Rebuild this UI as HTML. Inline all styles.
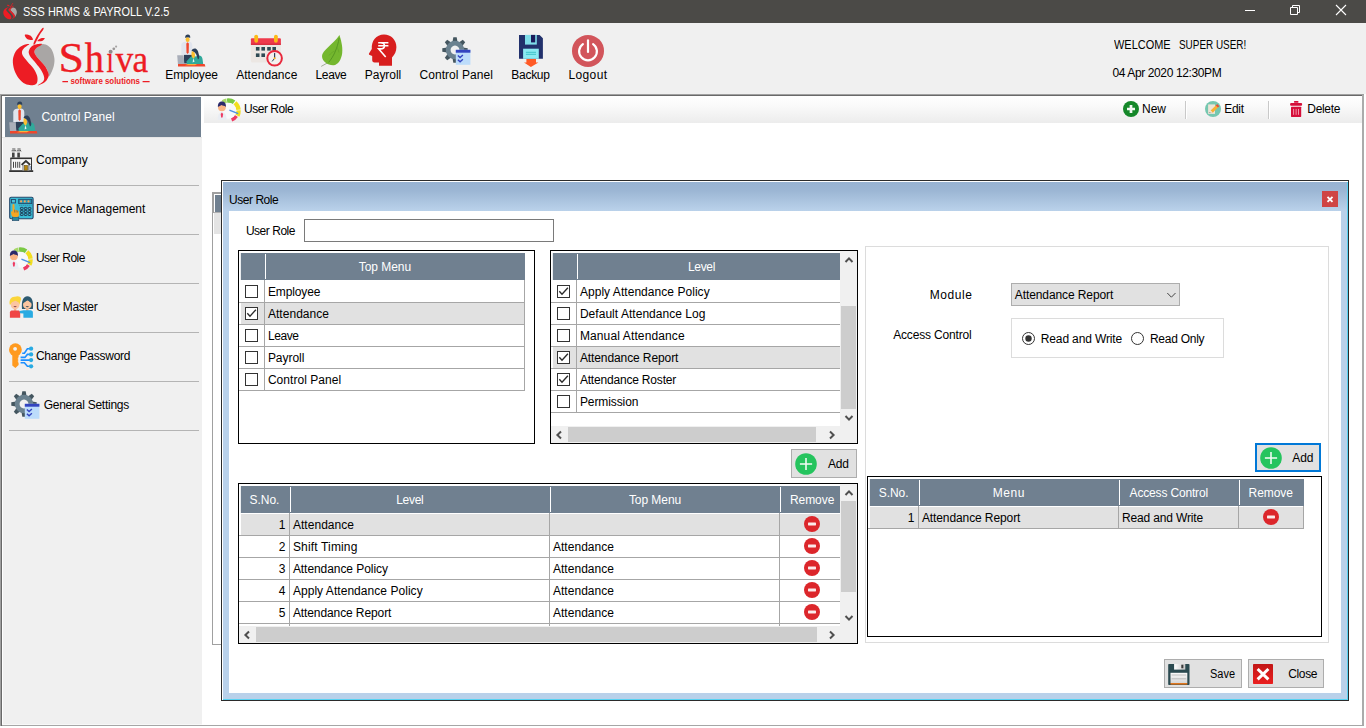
<!DOCTYPE html><html><head><meta charset="utf-8"><title>SSS HRMS &amp; PAYROLL</title><style>html,body{margin:0;padding:0}body{width:1366px;height:728px;overflow:hidden;position:relative;background:#f0f0f0;font-family:"Liberation Sans",sans-serif;font-size:12px;color:#000}svg{display:block;overflow:visible}</style></head><body>
<div style="position:absolute;left:0px;top:0px;width:1366px;height:23px;background:#4b4a47"></div>
<svg style="position:absolute;left:3px;top:3.4px" width="14" height="16.4" viewBox="0 0 43 58" preserveAspectRatio="none"><path d="M30.04,16.13 C31.96,15.77 34.30,16.74 36.00,17.83 C37.70,18.92 39.19,20.60 40.26,22.68 C41.32,24.77 42.10,27.93 42.38,30.34 C42.67,32.75 42.43,34.88 41.96,37.15 C41.49,39.42 40.43,42.09 39.57,43.96 C38.72,45.83 37.45,48.38 36.85,48.38 C36.26,48.38 36.57,45.55 36.00,43.96 C35.43,42.37 34.58,40.55 33.45,38.85 C32.31,37.15 30.75,35.59 29.19,33.74 C27.63,31.90 25.22,29.49 24.09,27.79 C22.95,26.09 22.31,24.84 22.38,23.53 C22.45,22.23 23.23,21.19 24.51,19.96 C25.79,18.72 28.13,16.48 30.04,16.13 Z" fill="#a9a6a5"/><path d="M17.28,16.30 C17.63,15.67 15.72,15.86 14.30,16.21 C12.88,16.57 10.54,17.21 8.77,18.43 C6.99,19.65 4.98,21.26 3.66,23.53 C2.34,25.80 1.06,28.92 0.85,32.04 C0.64,35.16 1.35,39.13 2.38,42.26 C3.42,45.38 5.29,48.50 7.06,50.77 C8.84,53.04 11.04,54.78 13.02,55.87 C15.01,56.96 17.21,57.25 18.98,57.32 C20.75,57.39 22.58,57.04 23.66,56.30 C24.74,55.56 25.23,54.38 25.45,52.89 C25.66,51.40 25.59,49.42 24.94,47.36 C24.28,45.30 23.09,42.82 21.53,40.55 C19.97,38.28 17.35,35.87 15.57,33.74 C13.80,31.62 11.82,29.49 10.89,27.79 C9.97,26.09 9.83,24.84 10.04,23.53 C10.26,22.23 10.96,21.16 12.17,19.96 C13.38,18.75 16.92,16.92 17.28,16.30 Z" fill="#ed1c24"/><path d="M20.51,17.83 C21.79,16.92 23.35,16.50 24.94,16.21 C26.52,15.93 30.11,15.50 30.04,16.13 C29.97,16.75 25.79,18.72 24.51,19.96 C23.23,21.19 22.45,22.23 22.38,23.53 C22.31,24.84 22.95,26.09 24.09,27.79 C25.22,29.49 27.63,31.90 29.19,33.74 C30.75,35.59 32.31,37.15 33.45,38.85 C34.58,40.55 35.46,42.47 36.00,43.96 C36.54,45.45 36.94,46.37 36.68,47.79 C36.43,49.21 35.57,51.12 34.47,52.47 C33.36,53.82 31.49,55.06 30.04,55.87 C28.60,56.68 25.62,57.72 25.79,57.32 C25.96,56.92 30.01,54.87 31.06,53.49 C32.11,52.11 32.40,50.94 32.09,49.06 C31.77,47.19 30.52,44.52 29.19,42.26 C27.86,39.99 25.79,37.57 24.09,35.45 C22.38,33.32 20.18,31.19 18.98,29.49 C17.77,27.79 17.13,26.54 16.85,25.23 C16.57,23.93 16.67,22.89 17.28,21.66 C17.89,20.43 19.23,18.74 20.51,17.83 Z" fill="#ed1c24"/><path d="M21.53,15.45 C21.91,14.03 23.94,9.87 25.36,7.36 C26.78,4.85 29.01,1.43 30.04,0.38 C31.08,-0.67 32.03,-0.13 31.57,1.06 C31.12,2.26 28.74,5.06 27.32,7.53 C25.90,10.00 24.03,14.55 23.06,15.87 C22.10,17.19 21.15,16.87 21.53,15.45 Z" fill="#ed1c24"/><path d="M12.85,6.77 C13.38,6.21 16.96,6.78 18.30,7.62 C19.63,8.45 21.38,11.23 20.85,11.79 C20.33,12.34 16.48,11.77 15.15,10.94 C13.82,10.10 12.33,7.32 12.85,6.77 Z" fill="#ed1c24"/><path d="M25.36,13.06 C25.11,12.64 27.28,10.89 28.51,10.43 C29.74,9.96 32.51,9.83 32.77,10.26 C33.02,10.68 31.28,12.51 30.04,12.98 C28.81,13.45 25.62,13.49 25.36,13.06 Z" fill="#ed1c24"/></svg>
<div style="position:absolute;top:4.84px;line-height:14px;font-size:12px;white-space:pre;left:22.9px;color:#fff;transform:scaleX(0.91);transform-origin:0 0;">SSS HRMS &amp; PAYROLL V.2.5</div>
<svg style="position:absolute;left:1240px;top:0" width="126" height="23" viewBox="0 0 126 23"><path d="M5,10.5 H15" stroke="#fff" stroke-width="1"/><path d="M50.5,7.5 H57.5 V14.5 H50.5 Z M52.5,7.5 V5.5 H59.5 V12.5 H57.5" stroke="#fff" stroke-width="1" fill="none"/><path d="M96,5 L106,15 M106,5 L96,15" stroke="#fff" stroke-width="1.1"/></svg>
<svg style="position:absolute;left:12px;top:28px" width="43" height="58" viewBox="0 0 43 58"><path d="M30.04,16.13 C31.96,15.77 34.30,16.74 36.00,17.83 C37.70,18.92 39.19,20.60 40.26,22.68 C41.32,24.77 42.10,27.93 42.38,30.34 C42.67,32.75 42.43,34.88 41.96,37.15 C41.49,39.42 40.43,42.09 39.57,43.96 C38.72,45.83 37.45,48.38 36.85,48.38 C36.26,48.38 36.57,45.55 36.00,43.96 C35.43,42.37 34.58,40.55 33.45,38.85 C32.31,37.15 30.75,35.59 29.19,33.74 C27.63,31.90 25.22,29.49 24.09,27.79 C22.95,26.09 22.31,24.84 22.38,23.53 C22.45,22.23 23.23,21.19 24.51,19.96 C25.79,18.72 28.13,16.48 30.04,16.13 Z" fill="#a9a6a5"/><path d="M17.28,16.30 C17.63,15.67 15.72,15.86 14.30,16.21 C12.88,16.57 10.54,17.21 8.77,18.43 C6.99,19.65 4.98,21.26 3.66,23.53 C2.34,25.80 1.06,28.92 0.85,32.04 C0.64,35.16 1.35,39.13 2.38,42.26 C3.42,45.38 5.29,48.50 7.06,50.77 C8.84,53.04 11.04,54.78 13.02,55.87 C15.01,56.96 17.21,57.25 18.98,57.32 C20.75,57.39 22.58,57.04 23.66,56.30 C24.74,55.56 25.23,54.38 25.45,52.89 C25.66,51.40 25.59,49.42 24.94,47.36 C24.28,45.30 23.09,42.82 21.53,40.55 C19.97,38.28 17.35,35.87 15.57,33.74 C13.80,31.62 11.82,29.49 10.89,27.79 C9.97,26.09 9.83,24.84 10.04,23.53 C10.26,22.23 10.96,21.16 12.17,19.96 C13.38,18.75 16.92,16.92 17.28,16.30 Z" fill="#ed1c24"/><path d="M20.51,17.83 C21.79,16.92 23.35,16.50 24.94,16.21 C26.52,15.93 30.11,15.50 30.04,16.13 C29.97,16.75 25.79,18.72 24.51,19.96 C23.23,21.19 22.45,22.23 22.38,23.53 C22.31,24.84 22.95,26.09 24.09,27.79 C25.22,29.49 27.63,31.90 29.19,33.74 C30.75,35.59 32.31,37.15 33.45,38.85 C34.58,40.55 35.46,42.47 36.00,43.96 C36.54,45.45 36.94,46.37 36.68,47.79 C36.43,49.21 35.57,51.12 34.47,52.47 C33.36,53.82 31.49,55.06 30.04,55.87 C28.60,56.68 25.62,57.72 25.79,57.32 C25.96,56.92 30.01,54.87 31.06,53.49 C32.11,52.11 32.40,50.94 32.09,49.06 C31.77,47.19 30.52,44.52 29.19,42.26 C27.86,39.99 25.79,37.57 24.09,35.45 C22.38,33.32 20.18,31.19 18.98,29.49 C17.77,27.79 17.13,26.54 16.85,25.23 C16.57,23.93 16.67,22.89 17.28,21.66 C17.89,20.43 19.23,18.74 20.51,17.83 Z" fill="#ed1c24"/><path d="M21.53,15.45 C21.91,14.03 23.94,9.87 25.36,7.36 C26.78,4.85 29.01,1.43 30.04,0.38 C31.08,-0.67 32.03,-0.13 31.57,1.06 C31.12,2.26 28.74,5.06 27.32,7.53 C25.90,10.00 24.03,14.55 23.06,15.87 C22.10,17.19 21.15,16.87 21.53,15.45 Z" fill="#ed1c24"/><path d="M12.85,6.77 C13.38,6.21 16.96,6.78 18.30,7.62 C19.63,8.45 21.38,11.23 20.85,11.79 C20.33,12.34 16.48,11.77 15.15,10.94 C13.82,10.10 12.33,7.32 12.85,6.77 Z" fill="#ed1c24"/><path d="M25.36,13.06 C25.11,12.64 27.28,10.89 28.51,10.43 C29.74,9.96 32.51,9.83 32.77,10.26 C33.02,10.68 31.28,12.51 30.04,12.98 C28.81,13.45 25.62,13.49 25.36,13.06 Z" fill="#ed1c24"/></svg>
<svg style="position:absolute;left:58px;top:38px" width="96" height="50" viewBox="58 38 96 50"><g font-family="Liberation Serif" font-size="42.5" fill="#ed1c24" stroke="#ed1c24" stroke-width="0.4"><text transform="translate(58.48 71.7) scale(1.077 1)" x="0" y="0">S</text><text transform="translate(84.64 71.7) scale(0.901 1)" x="0" y="0">h</text><text transform="translate(106.55 71.7) scale(0.614 0.885)" x="0" y="0">&#305;</text><text transform="translate(115.60 71.7) scale(0.835 0.885)" x="0" y="0">v</text><text transform="translate(132.46 71.7) scale(0.827 0.885)" x="0" y="0">a</text></g><circle cx="110.6" cy="51.8" r="2" fill="#8f8c8c"/><circle cx="113.8" cy="48.8" r="1.4" fill="#9a9797"/><circle cx="116.1" cy="46.6" r="1.1" fill="#a8a5a5"/><path d="M62.4,81.6 H68 M142.6,81.6 H149.6" stroke="#ed1c24" stroke-width="1.3"/><text x="70.4" y="84.1" font-family="Liberation Sans" font-size="9" font-weight="bold" fill="#ed1c24" textLength="69.6" lengthAdjust="spacingAndGlyphs">software solutions</text></svg>
<svg style="position:absolute;left:177px;top:34px" width="29" height="33" viewBox="0 0 29 33"><path d="M4.3,20.9 V11.2 C4.3,8.6 6.6,7.5 10.6,7.5 C14.8,7.5 15.3,9.6 15.3,11.7 V20.9 Z" fill="#e1e5ee"/><ellipse cx="10.6" cy="5.4" rx="2" ry="2.5" fill="#fdc02f"/><path d="M8.2,4 C8,1.4 9.2,0.6 10.9,0.6 C12.7,0.6 13.5,1.8 13.2,4 C12,3.1 9.6,3.1 8.2,4 Z" fill="#2d4059"/><path d="M10.6,8.3 L11.9,9.6 L11.7,18.4 L10.6,19.9 L9.5,18.4 L9.3,9.6 Z" fill="#f0472c"/><rect x="7" y="20.9" width="8" height="8.6" fill="#2d4059"/><path d="M0.2,21.3 H6.6 L7.4,30 H0.9 Z" fill="#a9aeb9"/><path d="M9.4,27.5 L13.5,23 C15,21.8 17,22 18.5,22.5 L22.5,21.5 C24.5,21.8 25.3,23.5 25.6,25.5 L26.2,30.2 H10 Z" fill="#31a99b"/><path d="M14.5,17 C15.2,14.8 17.5,14 19.3,15 C21.3,16.2 21.2,18.8 22,21 C22.6,22.8 22.4,24.8 21,25.6 C20.2,23.5 19.8,21 18.6,19.4 C17.6,18.2 16,17.4 14.5,17 Z" fill="#2d4059"/><path d="M14.7,17.3 C16.4,17.3 17.8,18.4 18,20.4 C18.2,22.4 17.4,23.6 16.6,24.6 C15.6,24 14.6,22.8 14.4,21 Z" fill="#fdc02f"/><path d="M16.2,24.2 L17.6,27.4 L15.6,28.6 Z" fill="#e9f4f2"/><path d="M1,30 H27.6 L28.4,32.5 H1 Z" fill="#f0472c"/><path d="M11,30 H20 L18,31.2 H8 Z" fill="#fbb03b"/></svg>
<svg style="position:absolute;left:250px;top:34px" width="34" height="34" viewBox="0 0 34 34"><rect x="0.9" y="7" width="30" height="21.6" rx="1.6" fill="#ece7e3"/><rect x="0.9" y="4.3" width="30" height="6.6" rx="1" fill="#ee3a4c"/><rect x="0.9" y="9.6" width="30" height="1.3" fill="#d82f40"/><rect x="4.3" y="0.7" width="3.8" height="8" rx="1.9" fill="#fbb917"/><rect x="24" y="0.7" width="3.8" height="8" rx="1.9" fill="#fbb917"/><rect x="5.9" y="13" width="3.6" height="3.6" fill="#2e4a53"/><rect x="11.4" y="13" width="3.6" height="3.6" fill="#2e4a53"/><rect x="17.2" y="13" width="3.6" height="3.6" fill="#2e4a53"/><rect x="22.4" y="13" width="3.6" height="3.6" fill="#2e4a53"/><rect x="5.9" y="19.4" width="3.6" height="3.6" fill="#2e4a53"/><rect x="11.4" y="19.4" width="3.6" height="3.6" fill="#2e4a53"/><circle cx="24.6" cy="24.3" r="7.3" fill="#f4f1ef" stroke="#e8283c" stroke-width="2"/><path d="M24.6,24.3 V19.4" stroke="#2d4059" stroke-width="1.2" stroke-linecap="round"/><path d="M24.6,24.3 L22.4,27.1" stroke="#2d4059" stroke-width="1" stroke-linecap="round"/><circle cx="24.6" cy="24.3" r="1" fill="#fbb917"/></svg>
<svg style="position:absolute;left:320px;top:34px" width="24" height="34" viewBox="0 0 24 34"><path d="M8.6,28.3 L1.2,32.4" stroke="#9aa48c" stroke-width="0.9"/><path d="M19.5,1 C20.6,5 23,12 22.2,19 C21.4,25.5 18.2,31 13.5,31.2 C8,31.5 2,27.4 2,22 C2,16.5 13,10.5 19.5,1 Z" fill="#74b72e"/><path d="M19.2,4 C17.5,14 13.4,23 8.6,28.4" stroke="#4f8f20" stroke-width="0.8" fill="none"/><path d="M14.8,17 C13,17.5 10.5,19.5 9,21.5 M16.6,13 C18,14.5 18.6,16.5 18.8,18.5" stroke="#5e9f24" stroke-width="0.5" fill="none"/></svg>
<svg style="position:absolute;left:368px;top:34px" width="30" height="33" viewBox="0 0 30 33"><path d="M16,0.6 C23,0.6 28.4,6 28.4,13 C28.4,17.5 26.6,20.8 24,23.4 L24,31.8 L11,31.8 L11,28.4 L6.6,28.4 C4.9,28.4 4.2,27.5 4.2,26 L4.2,22 L1.8,21 C0.8,20.6 0.7,19.8 1.3,19 L3.8,15 C3.4,7 8,0.6 16,0.6 Z" fill="#d81e1e"/><path d="M10.2,8.7 H20.4 M10.2,11.8 H20.4 M12.5,8.7 C17.8,8.7 17.8,14.9 12.5,14.9 H10.6 L17.7,23" stroke="#fff" stroke-width="1.6" fill="none" stroke-linejoin="miter"/></svg>
<svg style="position:absolute;left:441.6px;top:37.3px" width="30" height="30" viewBox="0 0 30 30"><path d="M-2.5,-8 L-1.7,-12.7 H1.7 L2.5,-8 Z" transform="translate(13,13) rotate(0)" fill="#44565f"/><path d="M-2.5,-8 L-1.7,-12.7 H1.7 L2.5,-8 Z" transform="translate(13,13) rotate(45)" fill="#44565f"/><path d="M-2.5,-8 L-1.7,-12.7 H1.7 L2.5,-8 Z" transform="translate(13,13) rotate(90)" fill="#44565f"/><path d="M-2.5,-8 L-1.7,-12.7 H1.7 L2.5,-8 Z" transform="translate(13,13) rotate(135)" fill="#44565f"/><path d="M-2.5,-8 L-1.7,-12.7 H1.7 L2.5,-8 Z" transform="translate(13,13) rotate(180)" fill="#44565f"/><path d="M-2.5,-8 L-1.7,-12.7 H1.7 L2.5,-8 Z" transform="translate(13,13) rotate(225)" fill="#44565f"/><path d="M-2.5,-8 L-1.7,-12.7 H1.7 L2.5,-8 Z" transform="translate(13,13) rotate(270)" fill="#44565f"/><path d="M-2.5,-8 L-1.7,-12.7 H1.7 L2.5,-8 Z" transform="translate(13,13) rotate(315)" fill="#44565f"/><path fill-rule="evenodd" fill="#6a818f" d="M13,3.8 a9.2,9.2 0 1 0 0.001,0 Z M13,8.6 a4.4,4.4 0 1 1 -0.001,0 Z"/><rect x="13.8" y="12.8" width="14.6" height="15" fill="#bcdcfb"/><rect x="13.8" y="12.8" width="14.6" height="2.9" fill="#3344c0"/><path d="M15.9,18.4 L18.1,20.5 L20.9,18 M15.9,22.7 L18.1,24.8 L20.9,22.3" stroke="#3344c0" stroke-width="1.4" fill="none"/></svg>
<svg style="position:absolute;left:518px;top:34px" width="26" height="34" viewBox="0 0 26 34"><path d="M1,0.9 H21.6 L24.9,4.2 V24.8 H1 Z" fill="#22316c"/><rect x="7" y="0.9" width="11.8" height="9.7" fill="#7fdde9"/><rect x="13" y="0.9" width="4.2" height="7.5" fill="#1b1b5a"/><rect x="5.1" y="14.7" width="15.7" height="10.1" fill="#8ceaf2"/><path d="M7.9,18.3 H18 M7.9,20.3 H18" stroke="#3cc4c9" stroke-width="1"/><path d="M8.4,25 H18 V28.6 H20.4 L12.9,32.9 L6,28.6 H8.4 Z" fill="#ff5a26"/></svg>
<svg style="position:absolute;left:571px;top:34px" width="34" height="34" viewBox="0 0 34 34"><circle cx="17" cy="16.9" r="16" fill="#d2555b"/><path d="M22.1,10.1 A8.9,8.9 0 1 1 11.9,10.1" stroke="#fff" stroke-width="2.2" fill="none" stroke-linecap="round"/><path d="M17,6.4 V18" stroke="#fff" stroke-width="2.2" stroke-linecap="round"/></svg>
<div style="position:absolute;top:67.84px;line-height:14px;font-size:12px;white-space:pre;letter-spacing:-0.114px;left:165.3px;">Employee</div>
<div style="position:absolute;top:67.84px;line-height:14px;font-size:12px;white-space:pre;letter-spacing:0.045px;left:236.2px;">Attendance</div>
<div style="position:absolute;top:67.84px;line-height:14px;font-size:12px;white-space:pre;letter-spacing:-0.4px;left:315.6px;">Leave</div>
<div style="position:absolute;top:67.84px;line-height:14px;font-size:12px;white-space:pre;letter-spacing:-0.034px;left:364.8px;">Payroll</div>
<div style="position:absolute;top:67.84px;line-height:14px;font-size:12px;white-space:pre;letter-spacing:0.05px;left:419.5px;">Control Panel</div>
<div style="position:absolute;top:67.84px;line-height:14px;font-size:12px;white-space:pre;letter-spacing:-0.28px;left:511.3px;">Backup</div>
<div style="position:absolute;top:67.84px;line-height:14px;font-size:12px;white-space:pre;letter-spacing:0.36px;left:568.5px;">Logout</div>
<div style="position:absolute;top:37.84px;line-height:14px;font-size:12px;white-space:pre;left:1114.2px;;transform:scaleX(0.913);transform-origin:0 0;">WELCOME</div>
<div style="position:absolute;top:37.84px;line-height:14px;font-size:12px;white-space:pre;left:1179.2px;;transform:scaleX(0.826);transform-origin:0 0;">SUPER USER!</div>
<div style="position:absolute;top:65.84px;line-height:14px;font-size:12px;white-space:pre;letter-spacing:-0.378px;left:1112.4px;">04 Apr 2020 12:30PM</div>
<div style="position:absolute;left:0px;top:94px;width:1366px;height:1px;background:#a0a0a0"></div>
<div style="position:absolute;left:0px;top:95px;width:1364px;height:633px;background:#fff"></div>
<div style="position:absolute;left:0px;top:95px;width:1px;height:632px;background:#a0a0a0"></div>
<div style="position:absolute;left:1px;top:95px;width:1362px;height:1px;background:#696969"></div>
<div style="position:absolute;left:1px;top:95px;width:1px;height:631px;background:#696969"></div>
<div style="position:absolute;left:1362px;top:95px;width:2px;height:631px;background:#ababab"></div>
<div style="position:absolute;left:2px;top:725px;width:1362px;height:1px;background:#a6a6a6"></div>
<div style="position:absolute;left:1364px;top:94px;width:2px;height:634px;background:#fff"></div>
<div style="position:absolute;left:0px;top:726px;width:1366px;height:2px;background:#fff"></div>
<div style="position:absolute;left:2px;top:96px;width:200px;height:629px;background:#f0f0f0"></div>
<div style="position:absolute;left:2px;top:96px;width:1px;height:629px;background:#fff"></div>
<div style="position:absolute;left:2px;top:724px;width:200px;height:1px;background:#f8f8f8"></div>
<div style="position:absolute;left:2px;top:96px;width:200px;height:42px;background:#fff"></div>
<div style="position:absolute;left:5px;top:97px;width:196px;height:40px;background:#708090"></div>
<div style="position:absolute;left:2px;top:137px;width:200px;height:1px;background:#e6e6e6"></div>
<svg style="position:absolute;left:9px;top:101px" width="29" height="33" viewBox="0 0 29 33"><path d="M4.3,20.9 V11.2 C4.3,8.6 6.6,7.5 10.6,7.5 C14.8,7.5 15.3,9.6 15.3,11.7 V20.9 Z" fill="#e1e5ee"/><ellipse cx="10.6" cy="5.4" rx="2" ry="2.5" fill="#fdc02f"/><path d="M8.2,4 C8,1.4 9.2,0.6 10.9,0.6 C12.7,0.6 13.5,1.8 13.2,4 C12,3.1 9.6,3.1 8.2,4 Z" fill="#2d4059"/><path d="M10.6,8.3 L11.9,9.6 L11.7,18.4 L10.6,19.9 L9.5,18.4 L9.3,9.6 Z" fill="#f0472c"/><rect x="7" y="20.9" width="8" height="8.6" fill="#2d4059"/><path d="M0.2,21.3 H6.6 L7.4,30 H0.9 Z" fill="#a9aeb9"/><path d="M9.4,27.5 L13.5,23 C15,21.8 17,22 18.5,22.5 L22.5,21.5 C24.5,21.8 25.3,23.5 25.6,25.5 L26.2,30.2 H10 Z" fill="#31a99b"/><path d="M14.5,17 C15.2,14.8 17.5,14 19.3,15 C21.3,16.2 21.2,18.8 22,21 C22.6,22.8 22.4,24.8 21,25.6 C20.2,23.5 19.8,21 18.6,19.4 C17.6,18.2 16,17.4 14.5,17 Z" fill="#2d4059"/><path d="M14.7,17.3 C16.4,17.3 17.8,18.4 18,20.4 C18.2,22.4 17.4,23.6 16.6,24.6 C15.6,24 14.6,22.8 14.4,21 Z" fill="#fdc02f"/><path d="M16.2,24.2 L17.6,27.4 L15.6,28.6 Z" fill="#e9f4f2"/><path d="M1,30 H27.6 L28.4,32.5 H1 Z" fill="#f0472c"/><path d="M11,30 H20 L18,31.2 H8 Z" fill="#fbb03b"/></svg>
<div style="position:absolute;top:109.84px;line-height:14px;font-size:12px;white-space:pre;letter-spacing:0.05px;left:41.4px;color:#fff">Control Panel</div>
<svg style="position:absolute;left:9px;top:147px" width="25" height="26" viewBox="0 0 25 26"><rect x="2.2" y="11.5" width="20" height="12" fill="#f7f7f7"/><rect x="0.2" y="23.2" width="24" height="1.8" fill="#333"/><rect x="1.4" y="10.5" width="21.6" height="1.6" fill="#333"/><rect x="1.4" y="11" width="1" height="12.5" fill="#333"/><rect x="22" y="11" width="1" height="12.5" fill="#333"/><rect x="4.1" y="14.8" width="0.9" height="6" fill="#333"/><rect x="6.2" y="14.8" width="0.9" height="6" fill="#333"/><rect x="8.3" y="14.8" width="0.9" height="6" fill="#333"/><rect x="10.3" y="14.8" width="0.9" height="6" fill="#333"/><rect x="3" y="5.6" width="2.6" height="5" fill="#444"/><rect x="8.3" y="5.6" width="2.6" height="5" fill="#444"/><path d="M2.6,3.8 h3.4 M3.2,2 h3.2 M7.8,3.8 h3.4 M8.4,2 h3.2 M6,2.9 l0.8,1.5 M11.2,2.9 l0.8,1.5" stroke="#444" stroke-width="0.9"/><path d="M13.4,23.2 V17.6 L16.9,14.6 L20.4,17.6 V23.2 Z" fill="#f7f7f7"/><path d="M12.6,17.9 L16.9,14.1 L21.2,17.9" stroke="#333" stroke-width="1.9" fill="none"/><path d="M14,17.5 V23 M19.8,17.5 V23" stroke="#333" stroke-width="0.7"/><rect x="15.3" y="18.4" width="3.3" height="4.8" fill="#b8860b" stroke="#5a4306" stroke-width="0.5"/><rect x="20.6" y="19" width="1.3" height="3.6" fill="#8ea2c8"/></svg>
<div style="position:absolute;top:152.84px;line-height:14px;font-size:12px;white-space:pre;letter-spacing:0.1px;left:35.9px;">Company</div>
<div style="position:absolute;left:9px;top:185px;width:190px;height:1px;background:#b4b4b4"></div>
<svg style="position:absolute;left:9px;top:196px" width="25" height="26" viewBox="0 0 25 26"><rect x="0.7" y="1.3" width="23.4" height="21.4" rx="1.4" fill="#39bdd7" stroke="#26476a" stroke-width="1.1"/><rect x="9.7" y="3.3" width="13" height="4.3" fill="#2596b2" stroke="#26476a" stroke-width="0.9"/><circle cx="12.1" cy="5.45" r="1.1" fill="#f7a35c"/><circle cx="15.8" cy="5.45" r="1.1" fill="#f7a35c"/><circle cx="19.5" cy="5.45" r="1.1" fill="#f7a35c"/><rect x="11.4" y="11.4" width="2.7" height="2.1" rx="0.4" fill="#3fb4cc" stroke="#21435f" stroke-width="1"/><rect x="11.4" y="14.4" width="2.7" height="2.1" rx="0.4" fill="#3fb4cc" stroke="#21435f" stroke-width="1"/><rect x="11.4" y="17.4" width="2.7" height="2.1" rx="0.4" fill="#3fb4cc" stroke="#21435f" stroke-width="1"/><rect x="15.3" y="11.4" width="2.7" height="2.1" rx="0.4" fill="#3fb4cc" stroke="#21435f" stroke-width="1"/><rect x="15.3" y="14.4" width="2.7" height="2.1" rx="0.4" fill="#3fb4cc" stroke="#21435f" stroke-width="1"/><rect x="15.3" y="17.4" width="2.7" height="2.1" rx="0.4" fill="#3fb4cc" stroke="#21435f" stroke-width="1"/><rect x="19.2" y="11.4" width="2.7" height="2.1" rx="0.4" fill="#3fb4cc" stroke="#21435f" stroke-width="1"/><rect x="19.2" y="14.4" width="2.7" height="2.1" rx="0.4" fill="#3fb4cc" stroke="#21435f" stroke-width="1"/><rect x="19.2" y="17.4" width="2.7" height="2.1" rx="0.4" fill="#3fb4cc" stroke="#21435f" stroke-width="1"/><path d="M10.2,9.3 H22.6" stroke="#2a4a6a" stroke-width="0.5" stroke-dasharray="1.2,0.8"/><rect x="2.5" y="3.5" width="3.9" height="3.4" fill="#4cc2da" stroke="#26476a" stroke-width="0.9"/><rect x="3.4" y="21" width="6.4" height="3.7" fill="#2a8aa0" stroke="#2a4a6a" stroke-width="0.6"/><path d="M3.5,9 a1,1 0 0 1 2,0 V13.6 L8.6,14.4 C9.6,14.7 9.9,15.4 9.9,16.4 V19 C9.9,20.2 9.2,20.9 8,20.9 H5 C3.6,20.9 2.6,19.8 2.4,18.4 L2,16 C2.4,15.2 3,15.2 3.5,15.8 Z" fill="#f5a623"/><path d="M5.5,13.6 V16.5 M7.1,14.1 V16.5 M8.6,14.6 V16.5" stroke="#2a4a6a" stroke-width="0.45"/></svg>
<div style="position:absolute;top:201.84px;line-height:14px;font-size:12px;white-space:pre;letter-spacing:-0.038px;left:35.9px;">Device Management</div>
<div style="position:absolute;left:9px;top:234px;width:190px;height:1px;background:#b4b4b4"></div>
<svg style="position:absolute;left:9px;top:247px" width="25" height="23" viewBox="0 0 25 23"><path d="M5.84,4.07 A10.3,10.3 0 0 1 9.51,2.66" stroke="#a9d86a" stroke-width="4.4" fill="none"/><path d="M10.04,2.58 A10.3,10.3 0 0 1 17.06,4.26" stroke="#7ac943" stroke-width="4.4" fill="none"/><path d="M17.92,4.91 A10.3,10.3 0 0 1 21.54,11.72" stroke="#f2de1f" stroke-width="4.4" fill="none"/><path d="M21.59,12.44 A10.3,10.3 0 0 1 20.39,17.64" stroke="#f2de1f" stroke-width="4.4" fill="none"/><path d="M19.35,18.03 A9.6,9.6 0 0 1 14.58,21.82" stroke="#ee3a63" stroke-width="3.6" fill="none"/><circle cx="11.3" cy="12.8" r="7.9" fill="#f7f8fa"/><path d="M13,12.4 L20.6,15.4" stroke="#4a90e2" stroke-width="1.5" stroke-linecap="round"/><path d="M0.6,21.8 C0.6,16.4 2.5,14.2 4.9,14.2 C7.6,14.2 9.6,16.4 9.6,21.8 Z" fill="#e9edf3"/><path d="M4.9,14.6 L6.1,15.9 L5.7,18.9 L4.9,19.9 L4.1,18.9 L3.7,15.9 Z" fill="#ee3a63"/><circle cx="4.9" cy="9.3" r="3.9" fill="#f9b384"/><path d="M0.9,8.9 C0.7,5.4 2.6,3.6 5,3.6 C7.4,3.6 9.2,5.4 8.9,8.9 C7.4,7.3 5.4,7.6 4.6,6.9 C3.6,7.9 2,8.1 0.9,8.9 Z" fill="#2b2a6b"/></svg>
<div style="position:absolute;top:250.84px;line-height:14px;font-size:12px;white-space:pre;letter-spacing:-0.475px;left:35.9px;">User Role</div>
<div style="position:absolute;left:9px;top:283px;width:190px;height:1px;background:#b4b4b4"></div>
<svg style="position:absolute;left:9px;top:295px" width="25" height="24" viewBox="0 0 25 24"><path d="M13,14 C12.2,6 14,1.2 18.4,1.2 C23,1.2 24.6,6 23.9,14 Z" fill="#2d5a70"/><circle cx="18.3" cy="9.7" r="4.3" fill="#fbc5a0"/><path d="M14,8 C15.5,7.6 17.5,6.4 18.6,4.8 C19.6,6.4 21.4,7.6 22.7,7.8 C22.6,4.6 21,3 18.4,3 C15.8,3 14.1,4.8 14,8 Z" fill="#2d5a70"/><path d="M16.6,11.2 q1.7,2 3.4,0 Z" fill="#2d3e50"/><path d="M0.7,9.5 C-0.2,4.5 2.6,1.4 5.8,1.8 C8.6,0.3 12.6,1.4 12,4.4 C11.2,6.6 11,8.5 10.4,9.5 Z" fill="#fbd53a"/><circle cx="6.1" cy="9.8" r="4.4" fill="#fbc5a0"/><path d="M1.6,8.4 C3,6.8 5,6.6 6.4,5.6 C7.8,6.8 9.6,7 10.6,8.2 C11,5.4 9,3.6 6.2,3.6 C3.4,3.6 1.4,5.4 1.6,8.4 Z" fill="#fbd53a"/><path d="M4.4,11.3 q1.7,2 3.4,0 Z" fill="#7a2a3a"/><path d="M4.9,14 h2.4 v2 h-2.4 Z M17.1,14 h2.4 v2 h-2.4 Z" fill="#f7b48c"/><path d="M0.9,17.5 C0.9,16 2,15.4 3.4,15.4 H8.8 C10.2,15.4 11.2,16 11.2,17.5 V22.8 H0.9 Z" fill="#f04545"/><path d="M10.6,15.9 L14.6,15.3 H21.4 C23,15.3 23.9,16.2 23.9,17.6 V22.8 H14.4 V18.4 L11,18.2 Z" fill="#29abe2"/></svg>
<div style="position:absolute;top:299.84px;line-height:14px;font-size:12px;white-space:pre;letter-spacing:-0.36px;left:35.9px;">User Master</div>
<div style="position:absolute;left:9px;top:332px;width:190px;height:1px;background:#b4b4b4"></div>
<svg style="position:absolute;left:9px;top:343px" width="25" height="26" viewBox="0 0 25 26"><circle cx="6.4" cy="6.7" r="6.4" fill="#ff9a1f"/><path d="M3.3,11.5 H9.6 V14.3 L8.6,15.2 L9.6,16.1 L8.6,17 L9.6,17.9 L8.6,18.8 L9.6,19.7 V22 L6.4,25 L3.3,22.4 Z" fill="#ff9a1f"/><circle cx="6.1" cy="5.8" r="1.9" fill="#f2f2f2"/><path d="M13.2,10.2 H15.4 L18.4,5.7 H21 M11.6,14.4 H15.9 L18.4,11.4 H21 M11.6,17.1 H21 M11.6,19.8 H15.4 L18.4,23.3 H21" stroke="#1e8fff" stroke-width="1.6" fill="none"/><circle cx="22.1" cy="5.7" r="2.15" fill="#29abe2"/><circle cx="22.1" cy="11.4" r="2.15" fill="#29abe2"/><circle cx="22.1" cy="17.1" r="2.15" fill="#29abe2"/><circle cx="22.1" cy="23.3" r="2.15" fill="#29abe2"/></svg>
<div style="position:absolute;top:348.84px;line-height:14px;font-size:12px;white-space:pre;letter-spacing:-0.243px;left:35.9px;">Change Password</div>
<div style="position:absolute;left:9px;top:381px;width:190px;height:1px;background:#b4b4b4"></div>
<svg style="position:absolute;left:10.6px;top:391.3px" width="30" height="30" viewBox="0 0 30 30"><path d="M-2.5,-8 L-1.7,-12.7 H1.7 L2.5,-8 Z" transform="translate(13,13) rotate(0)" fill="#44565f"/><path d="M-2.5,-8 L-1.7,-12.7 H1.7 L2.5,-8 Z" transform="translate(13,13) rotate(45)" fill="#44565f"/><path d="M-2.5,-8 L-1.7,-12.7 H1.7 L2.5,-8 Z" transform="translate(13,13) rotate(90)" fill="#44565f"/><path d="M-2.5,-8 L-1.7,-12.7 H1.7 L2.5,-8 Z" transform="translate(13,13) rotate(135)" fill="#44565f"/><path d="M-2.5,-8 L-1.7,-12.7 H1.7 L2.5,-8 Z" transform="translate(13,13) rotate(180)" fill="#44565f"/><path d="M-2.5,-8 L-1.7,-12.7 H1.7 L2.5,-8 Z" transform="translate(13,13) rotate(225)" fill="#44565f"/><path d="M-2.5,-8 L-1.7,-12.7 H1.7 L2.5,-8 Z" transform="translate(13,13) rotate(270)" fill="#44565f"/><path d="M-2.5,-8 L-1.7,-12.7 H1.7 L2.5,-8 Z" transform="translate(13,13) rotate(315)" fill="#44565f"/><path fill-rule="evenodd" fill="#6a818f" d="M13,3.8 a9.2,9.2 0 1 0 0.001,0 Z M13,8.6 a4.4,4.4 0 1 1 -0.001,0 Z"/><rect x="13.8" y="12.8" width="14.6" height="15" fill="#bcdcfb"/><rect x="13.8" y="12.8" width="14.6" height="2.9" fill="#3344c0"/><path d="M15.9,18.4 L18.1,20.5 L20.9,18 M15.9,22.7 L18.1,24.8 L20.9,22.3" stroke="#3344c0" stroke-width="1.4" fill="none"/></svg>
<div style="position:absolute;top:397.84px;line-height:14px;font-size:12px;white-space:pre;letter-spacing:-0.254px;left:43.7px;">General Settings</div>
<div style="position:absolute;left:9px;top:430px;width:190px;height:1px;background:#b4b4b4"></div>
<div style="position:absolute;left:204px;top:96px;width:1158px;height:27px;background:linear-gradient(#ffffff 0%,#f9f9f9 40%,#ececec 100%);border-radius:3px 0 0 0"></div>
<svg style="position:absolute;left:217px;top:97.5px" width="25" height="23" viewBox="0 0 25 23"><path d="M5.84,4.07 A10.3,10.3 0 0 1 9.51,2.66" stroke="#a9d86a" stroke-width="4.4" fill="none"/><path d="M10.04,2.58 A10.3,10.3 0 0 1 17.06,4.26" stroke="#7ac943" stroke-width="4.4" fill="none"/><path d="M17.92,4.91 A10.3,10.3 0 0 1 21.54,11.72" stroke="#f2de1f" stroke-width="4.4" fill="none"/><path d="M21.59,12.44 A10.3,10.3 0 0 1 20.39,17.64" stroke="#f2de1f" stroke-width="4.4" fill="none"/><path d="M19.35,18.03 A9.6,9.6 0 0 1 14.58,21.82" stroke="#ee3a63" stroke-width="3.6" fill="none"/><circle cx="11.3" cy="12.8" r="7.9" fill="#f7f8fa"/><path d="M13,12.4 L20.6,15.4" stroke="#4a90e2" stroke-width="1.5" stroke-linecap="round"/><path d="M0.6,21.8 C0.6,16.4 2.5,14.2 4.9,14.2 C7.6,14.2 9.6,16.4 9.6,21.8 Z" fill="#e9edf3"/><path d="M4.9,14.6 L6.1,15.9 L5.7,18.9 L4.9,19.9 L4.1,18.9 L3.7,15.9 Z" fill="#ee3a63"/><circle cx="4.9" cy="9.3" r="3.9" fill="#f9b384"/><path d="M0.9,8.9 C0.7,5.4 2.6,3.6 5,3.6 C7.4,3.6 9.2,5.4 8.9,8.9 C7.4,7.3 5.4,7.6 4.6,6.9 C3.6,7.9 2,8.1 0.9,8.9 Z" fill="#2b2a6b"/></svg>
<div style="position:absolute;top:101.84px;line-height:14px;font-size:12px;white-space:pre;letter-spacing:-0.475px;left:244.0px;">User Role</div>
<svg style="position:absolute;left:1123px;top:101px" width="16" height="16" viewBox="0 0 16 16"><circle cx="8" cy="8" r="8" fill="#15882a"/><path d="M4,8 H12 M8,4 V12" stroke="#f2f8f2" stroke-width="2.7"/></svg>
<div style="position:absolute;top:101.84px;line-height:14px;font-size:12px;white-space:pre;left:1142.0px;">New</div>
<div style="position:absolute;left:1185px;top:101px;width:1px;height:18px;background:#c9c9c9"></div>
<div style="position:absolute;left:1186px;top:101px;width:1px;height:18px;background:#fff"></div>
<svg style="position:absolute;left:1205px;top:101px" width="16" height="16" viewBox="0 0 16 16"><circle cx="8" cy="8" r="8" fill="#76c7b0"/><rect x="3.1" y="3.4" width="6.9" height="9.5" fill="#ece4d6"/><path d="M3.9,11.6 H6.4" stroke="#8a8a8a" stroke-width="0.7"/><path d="M12.6,4.8 L6.7,10.6" stroke="#f8b133" stroke-width="3"/><path d="M13.3,4.1 L11.9,5.5" stroke="#e74c3c" stroke-width="3"/><path d="M5.3,12 L7.2,11.2 L6,10 Z" fill="#f3e6c8"/></svg>
<div style="position:absolute;top:101.84px;line-height:14px;font-size:12px;white-space:pre;letter-spacing:-0.267px;left:1224.2px;">Edit</div>
<div style="position:absolute;left:1268px;top:101px;width:1px;height:18px;background:#c9c9c9"></div>
<div style="position:absolute;left:1269px;top:101px;width:1px;height:18px;background:#fff"></div>
<svg style="position:absolute;left:1290px;top:101px" width="13" height="16" viewBox="0 0 13 16"><rect x="3.9" y="0" width="4.6" height="1.8" rx="0.8" fill="#d50f3a"/><rect x="0.1" y="2" width="12" height="2.7" rx="1" fill="#d50f3a"/><rect x="1" y="5.7" width="10.2" height="10.2" rx="0.6" fill="#d50f3a"/><rect x="3.1" y="7.9" width="1" height="5.9" fill="#f493a8"/><rect x="5.6" y="7.9" width="1" height="5.9" fill="#f493a8"/><rect x="8" y="7.9" width="1" height="5.9" fill="#f493a8"/></svg>
<div style="position:absolute;top:101.84px;line-height:14px;font-size:12px;white-space:pre;letter-spacing:-0.32px;left:1307.3px;">Delete</div>
<div style="position:absolute;left:212px;top:192px;width:12px;height:2px;background:#a0a0a0"></div>
<div style="position:absolute;left:212px;top:192px;width:2px;height:21px;background:#a0a0a0"></div>
<div style="position:absolute;left:212px;top:213px;width:1px;height:432px;background:#a0a0a0"></div>
<div style="position:absolute;left:212px;top:644px;width:12px;height:1px;background:#a0a0a0"></div>
<div style="position:absolute;left:215px;top:195px;width:8px;height:17px;background:#708090"></div>
<div style="position:absolute;left:214px;top:212px;width:9px;height:1px;background:#b0b0b0"></div>
<div style="position:absolute;left:214px;top:213px;width:9px;height:21px;background:#e4e4e4"></div>
<div style="position:absolute;left:221px;top:180px;width:1128px;height:521px;background:#b9d1ea;box-sizing:border-box;border:1px solid #2b2b2b"></div>
<div style="position:absolute;left:222px;top:181px;width:1126px;height:1px;background:#fff"></div>
<div style="position:absolute;left:222px;top:181px;width:1px;height:519px;background:#fff"></div>
<div style="position:absolute;left:1347px;top:182px;width:1px;height:518px;background:#58d2f2"></div>
<div style="position:absolute;left:223px;top:699px;width:1125px;height:1px;background:#58d2f2"></div>
<div style="position:absolute;left:223px;top:182px;width:1124px;height:29px;background:linear-gradient(#97b2d2 0%,#9cb6d4 30%,#b8d0e9 95%,#b9d1ea 100%)"></div>
<div style="position:absolute;top:192.84px;line-height:14px;font-size:12px;white-space:pre;letter-spacing:-0.475px;left:229.1px;">User Role</div>
<div style="position:absolute;left:1322px;top:191px;width:16px;height:16px;background:#cf4444"></div>
<svg style="position:absolute;left:1322px;top:191px" width="16" height="16" viewBox="0 0 16 16"><path d="M5.5,5.9 L10.5,10.9 M10.5,5.9 L5.5,10.9" stroke="#fff" stroke-width="1.9"/></svg>
<div style="position:absolute;left:229px;top:211px;width:1112px;height:482px;background:#fff"></div>
<div style="position:absolute;top:223.84px;line-height:14px;font-size:12px;white-space:pre;letter-spacing:-0.475px;left:245.9px;">User Role</div>
<div style="position:absolute;left:304px;top:219px;width:250px;height:23px;box-sizing:border-box;border:1px solid #7a7a7a;background:#fff"></div>
<div style="position:absolute;left:238px;top:250px;width:297px;height:194px;box-sizing:border-box;border:1px solid #000;background:#fff"></div>
<div style="position:absolute;left:241px;top:253px;width:284px;height:27px;background:#708090"></div>
<div style="position:absolute;left:240px;top:253px;width:1px;height:27px;background:#e9ecef"></div>
<div style="position:absolute;left:265px;top:254px;width:1px;height:25px;background:#fff"></div>
<div style="position:absolute;top:259.84px;line-height:14px;font-size:12px;white-space:pre;letter-spacing:-0.058px;left:358.8px;color:#fff">Top Menu</div>
<div style="position:absolute;left:239px;top:302px;width:286px;height:1px;background:#a6a6a6"></div>
<div style="position:absolute;left:264px;top:280px;width:1px;height:23px;background:#a6a6a6"></div>
<svg style="position:absolute;left:245px;top:285px" width="13" height="13" viewBox="0 0 13 13"><rect x="0.5" y="0.5" width="12" height="12" fill="#fff" stroke="#333"/></svg>
<div style="position:absolute;left:524px;top:280px;width:1px;height:23px;background:#a6a6a6"></div>
<div style="position:absolute;top:284.84px;line-height:14px;font-size:12px;white-space:pre;letter-spacing:-0.114px;left:267.9px;">Employee</div>
<div style="position:absolute;left:241px;top:303px;width:284px;height:21px;background:#e1e1e1"></div>
<div style="position:absolute;left:239px;top:324px;width:286px;height:1px;background:#a6a6a6"></div>
<div style="position:absolute;left:264px;top:303px;width:1px;height:22px;background:#a6a6a6"></div>
<svg style="position:absolute;left:245px;top:307px" width="13" height="13" viewBox="0 0 13 13"><rect x="0.5" y="0.5" width="12" height="12" fill="#fff" stroke="#333"/><path d="M2.3,6.3 L5,9.3 L10.9,2.7" stroke="#2a2a2a" stroke-width="1.35" fill="none"/></svg>
<div style="position:absolute;left:524px;top:303px;width:1px;height:22px;background:#a6a6a6"></div>
<div style="position:absolute;top:306.84px;line-height:14px;font-size:12px;white-space:pre;letter-spacing:0.045px;left:267.9px;">Attendance</div>
<div style="position:absolute;left:239px;top:346px;width:286px;height:1px;background:#a6a6a6"></div>
<div style="position:absolute;left:264px;top:325px;width:1px;height:22px;background:#a6a6a6"></div>
<svg style="position:absolute;left:245px;top:329px" width="13" height="13" viewBox="0 0 13 13"><rect x="0.5" y="0.5" width="12" height="12" fill="#fff" stroke="#333"/></svg>
<div style="position:absolute;left:524px;top:325px;width:1px;height:22px;background:#a6a6a6"></div>
<div style="position:absolute;top:328.84px;line-height:14px;font-size:12px;white-space:pre;letter-spacing:-0.4px;left:267.9px;">Leave</div>
<div style="position:absolute;left:239px;top:368px;width:286px;height:1px;background:#a6a6a6"></div>
<div style="position:absolute;left:264px;top:347px;width:1px;height:22px;background:#a6a6a6"></div>
<svg style="position:absolute;left:245px;top:351px" width="13" height="13" viewBox="0 0 13 13"><rect x="0.5" y="0.5" width="12" height="12" fill="#fff" stroke="#333"/></svg>
<div style="position:absolute;left:524px;top:347px;width:1px;height:22px;background:#a6a6a6"></div>
<div style="position:absolute;top:350.84px;line-height:14px;font-size:12px;white-space:pre;letter-spacing:-0.034px;left:267.9px;">Payroll</div>
<div style="position:absolute;left:239px;top:390px;width:286px;height:1px;background:#a6a6a6"></div>
<div style="position:absolute;left:264px;top:369px;width:1px;height:22px;background:#a6a6a6"></div>
<svg style="position:absolute;left:245px;top:373px" width="13" height="13" viewBox="0 0 13 13"><rect x="0.5" y="0.5" width="12" height="12" fill="#fff" stroke="#333"/></svg>
<div style="position:absolute;left:524px;top:369px;width:1px;height:22px;background:#a6a6a6"></div>
<div style="position:absolute;top:372.84px;line-height:14px;font-size:12px;white-space:pre;letter-spacing:0.05px;left:267.9px;">Control Panel</div>
<div style="position:absolute;left:550px;top:250px;width:308px;height:194px;box-sizing:border-box;border:1px solid #000;background:#fff"></div>
<div style="position:absolute;left:553px;top:253px;width:287px;height:27px;background:#708090"></div>
<div style="position:absolute;left:552px;top:253px;width:1px;height:27px;background:#e9ecef"></div>
<div style="position:absolute;left:577px;top:254px;width:1px;height:25px;background:#fff"></div>
<div style="position:absolute;top:259.84px;line-height:14px;font-size:12px;white-space:pre;letter-spacing:-0.3px;left:687.9px;color:#fff">Level</div>
<div style="position:absolute;left:551px;top:302px;width:289px;height:1px;background:#a6a6a6"></div>
<div style="position:absolute;left:576px;top:280px;width:1px;height:23px;background:#a6a6a6"></div>
<svg style="position:absolute;left:557px;top:285px" width="13" height="13" viewBox="0 0 13 13"><rect x="0.5" y="0.5" width="12" height="12" fill="#fff" stroke="#333"/><path d="M2.3,6.3 L5,9.3 L10.9,2.7" stroke="#2a2a2a" stroke-width="1.35" fill="none"/></svg>
<div style="position:absolute;top:284.84px;line-height:14px;font-size:12px;white-space:pre;letter-spacing:0.046px;left:579.9px;">Apply Attendance Policy</div>
<div style="position:absolute;left:551px;top:324px;width:289px;height:1px;background:#a6a6a6"></div>
<div style="position:absolute;left:576px;top:303px;width:1px;height:22px;background:#a6a6a6"></div>
<svg style="position:absolute;left:557px;top:307px" width="13" height="13" viewBox="0 0 13 13"><rect x="0.5" y="0.5" width="12" height="12" fill="#fff" stroke="#333"/></svg>
<div style="position:absolute;top:306.84px;line-height:14px;font-size:12px;white-space:pre;letter-spacing:0.038px;left:579.9px;">Default Attendance Log</div>
<div style="position:absolute;left:551px;top:346px;width:289px;height:1px;background:#a6a6a6"></div>
<div style="position:absolute;left:576px;top:325px;width:1px;height:22px;background:#a6a6a6"></div>
<svg style="position:absolute;left:557px;top:329px" width="13" height="13" viewBox="0 0 13 13"><rect x="0.5" y="0.5" width="12" height="12" fill="#fff" stroke="#333"/></svg>
<div style="position:absolute;top:328.84px;line-height:14px;font-size:12px;white-space:pre;letter-spacing:0.125px;left:579.9px;">Manual Attendance</div>
<div style="position:absolute;left:553px;top:347px;width:287px;height:21px;background:#e1e1e1"></div>
<div style="position:absolute;left:551px;top:368px;width:289px;height:1px;background:#a6a6a6"></div>
<div style="position:absolute;left:576px;top:347px;width:1px;height:22px;background:#a6a6a6"></div>
<svg style="position:absolute;left:557px;top:351px" width="13" height="13" viewBox="0 0 13 13"><rect x="0.5" y="0.5" width="12" height="12" fill="#fff" stroke="#333"/><path d="M2.3,6.3 L5,9.3 L10.9,2.7" stroke="#2a2a2a" stroke-width="1.35" fill="none"/></svg>
<div style="position:absolute;top:350.84px;line-height:14px;font-size:12px;white-space:pre;letter-spacing:-0.099px;left:579.9px;">Attendance Report</div>
<div style="position:absolute;left:551px;top:390px;width:289px;height:1px;background:#a6a6a6"></div>
<div style="position:absolute;left:576px;top:369px;width:1px;height:22px;background:#a6a6a6"></div>
<svg style="position:absolute;left:557px;top:373px" width="13" height="13" viewBox="0 0 13 13"><rect x="0.5" y="0.5" width="12" height="12" fill="#fff" stroke="#333"/><path d="M2.3,6.3 L5,9.3 L10.9,2.7" stroke="#2a2a2a" stroke-width="1.35" fill="none"/></svg>
<div style="position:absolute;top:372.84px;line-height:14px;font-size:12px;white-space:pre;letter-spacing:-0.188px;left:579.9px;">Attendance Roster</div>
<div style="position:absolute;left:551px;top:412px;width:289px;height:1px;background:#a6a6a6"></div>
<div style="position:absolute;left:576px;top:391px;width:1px;height:22px;background:#a6a6a6"></div>
<svg style="position:absolute;left:557px;top:395px" width="13" height="13" viewBox="0 0 13 13"><rect x="0.5" y="0.5" width="12" height="12" fill="#fff" stroke="#333"/></svg>
<div style="position:absolute;top:394.84px;line-height:14px;font-size:12px;white-space:pre;letter-spacing:-0.089px;left:579.9px;">Permission</div>
<div style="position:absolute;left:840px;top:251px;width:17px;height:175px;background:#f0f0f0"></div>
<div style="position:absolute;left:841px;top:306px;width:15px;height:103px;background:#cdcdcd"></div>
<svg style="position:absolute;left:842.5px;top:254px" width="12" height="12" viewBox="-6 -6 12 12"><path d="M-3.5,2 L0,-1.6 L3.5,2" stroke="#4f4f4f" stroke-width="2" fill="none"/></svg>
<svg style="position:absolute;left:842.5px;top:411.5px" width="12" height="12" viewBox="-6 -6 12 12"><path d="M-3.5,-2 L0,1.6 L3.5,-2" stroke="#4f4f4f" stroke-width="2" fill="none"/></svg>
<div style="position:absolute;left:551px;top:426px;width:289px;height:17px;background:#f0f0f0"></div>
<div style="position:absolute;left:568px;top:427px;width:248px;height:15px;background:#cdcdcd"></div>
<svg style="position:absolute;left:553px;top:428.5px" width="12" height="12" viewBox="-6 -6 12 12"><path d="M2,-3.5 L-1.6,0 L2,3.5" stroke="#4f4f4f" stroke-width="2" fill="none"/></svg>
<svg style="position:absolute;left:826px;top:428.5px" width="12" height="12" viewBox="-6 -6 12 12"><path d="M-2,-3.5 L1.6,0 L-2,3.5" stroke="#4f4f4f" stroke-width="2" fill="none"/></svg>
<div style="position:absolute;left:840px;top:426px;width:17px;height:17px;background:#f0f0f0"></div>
<div style="position:absolute;left:791px;top:449px;width:66px;height:29px;box-sizing:border-box;border:1px solid #adadad;background:#e1e1e1"></div>
<svg style="position:absolute;left:794.8px;top:452.8px" width="22" height="22" viewBox="0 0 22 22"><circle cx="11" cy="11" r="10.8" fill="#25c45e"/><path d="M4.9,11 H17.1 M11,4.9 V17.1" stroke="#f4fbf6" stroke-width="1.55"/></svg>
<div style="position:absolute;top:456.84px;line-height:14px;font-size:12px;white-space:pre;letter-spacing:-0.1px;left:827.9px;">Add</div>
<div style="position:absolute;left:238px;top:483px;width:620px;height:161px;box-sizing:border-box;border:1px solid #000;background:#fff"></div>
<div style="position:absolute;left:241px;top:486px;width:599px;height:27px;background:#708090"></div>
<div style="position:absolute;left:240px;top:486px;width:1px;height:27px;background:#e9ecef"></div>
<div style="position:absolute;left:290px;top:487px;width:1px;height:25px;background:#fff"></div>
<div style="position:absolute;left:550px;top:487px;width:1px;height:25px;background:#fff"></div>
<div style="position:absolute;left:780px;top:487px;width:1px;height:25px;background:#fff"></div>
<div style="position:absolute;top:492.84px;line-height:14px;font-size:12px;white-space:pre;letter-spacing:-0.05px;left:249.6px;color:#fff">S.No.</div>
<div style="position:absolute;top:492.84px;line-height:14px;font-size:12px;white-space:pre;letter-spacing:-0.3px;left:396.2px;color:#fff">Level</div>
<div style="position:absolute;top:492.84px;line-height:14px;font-size:12px;white-space:pre;letter-spacing:-0.058px;left:628.9px;color:#fff">Top Menu</div>
<div style="position:absolute;top:492.84px;line-height:14px;font-size:12px;white-space:pre;letter-spacing:-0.04px;left:789.9px;color:#fff">Remove</div>
<div style="position:absolute;left:241px;top:514px;width:599px;height:21px;background:#e1e1e1"></div>
<div style="position:absolute;left:239px;top:535px;width:601px;height:1px;background:#a6a6a6"></div>
<div style="position:absolute;left:289px;top:513px;width:1px;height:23px;background:#a6a6a6"></div>
<div style="position:absolute;top:517.84px;line-height:14px;font-size:12px;white-space:pre;left:-114.5px;width:400px;text-align:right;">1</div>
<div style="position:absolute;left:549px;top:513px;width:1px;height:23px;background:#a6a6a6"></div>
<div style="position:absolute;top:517.84px;line-height:14px;font-size:12px;white-space:pre;letter-spacing:0.045px;left:292.9px;">Attendance</div>
<div style="position:absolute;left:779px;top:513px;width:1px;height:23px;background:#a6a6a6"></div>
<div style="position:absolute;top:517.84px;line-height:14px;font-size:12px;white-space:pre;left:552.9px;"></div>
<svg style="position:absolute;left:804px;top:516px" width="16" height="16" viewBox="0 0 16 16"><circle cx="8" cy="8" r="8" fill="#dc262b"/><rect x="4" y="6.6" width="8" height="2.8" rx="0.6" fill="#fbeaea"/></svg>
<div style="position:absolute;left:239px;top:557px;width:601px;height:1px;background:#a6a6a6"></div>
<div style="position:absolute;left:289px;top:536px;width:1px;height:22px;background:#a6a6a6"></div>
<div style="position:absolute;top:539.84px;line-height:14px;font-size:12px;white-space:pre;left:-114.5px;width:400px;text-align:right;">2</div>
<div style="position:absolute;left:549px;top:536px;width:1px;height:22px;background:#a6a6a6"></div>
<div style="position:absolute;top:539.84px;line-height:14px;font-size:12px;white-space:pre;letter-spacing:0.164px;left:292.9px;">Shift Timing</div>
<div style="position:absolute;left:779px;top:536px;width:1px;height:22px;background:#a6a6a6"></div>
<div style="position:absolute;top:539.84px;line-height:14px;font-size:12px;white-space:pre;letter-spacing:0.045px;left:552.9px;">Attendance</div>
<svg style="position:absolute;left:804px;top:538px" width="16" height="16" viewBox="0 0 16 16"><circle cx="8" cy="8" r="8" fill="#dc262b"/><rect x="4" y="6.6" width="8" height="2.8" rx="0.6" fill="#fbeaea"/></svg>
<div style="position:absolute;left:239px;top:579px;width:601px;height:1px;background:#a6a6a6"></div>
<div style="position:absolute;left:289px;top:558px;width:1px;height:22px;background:#a6a6a6"></div>
<div style="position:absolute;top:561.84px;line-height:14px;font-size:12px;white-space:pre;left:-114.5px;width:400px;text-align:right;">3</div>
<div style="position:absolute;left:549px;top:558px;width:1px;height:22px;background:#a6a6a6"></div>
<div style="position:absolute;top:561.84px;line-height:14px;font-size:12px;white-space:pre;letter-spacing:-0.062px;left:292.9px;">Attendance Policy</div>
<div style="position:absolute;left:779px;top:558px;width:1px;height:22px;background:#a6a6a6"></div>
<div style="position:absolute;top:561.84px;line-height:14px;font-size:12px;white-space:pre;letter-spacing:0.045px;left:552.9px;">Attendance</div>
<svg style="position:absolute;left:804px;top:560px" width="16" height="16" viewBox="0 0 16 16"><circle cx="8" cy="8" r="8" fill="#dc262b"/><rect x="4" y="6.6" width="8" height="2.8" rx="0.6" fill="#fbeaea"/></svg>
<div style="position:absolute;left:239px;top:601px;width:601px;height:1px;background:#a6a6a6"></div>
<div style="position:absolute;left:289px;top:580px;width:1px;height:22px;background:#a6a6a6"></div>
<div style="position:absolute;top:583.84px;line-height:14px;font-size:12px;white-space:pre;left:-114.5px;width:400px;text-align:right;">4</div>
<div style="position:absolute;left:549px;top:580px;width:1px;height:22px;background:#a6a6a6"></div>
<div style="position:absolute;top:583.84px;line-height:14px;font-size:12px;white-space:pre;letter-spacing:0.046px;left:292.9px;">Apply Attendance Policy</div>
<div style="position:absolute;left:779px;top:580px;width:1px;height:22px;background:#a6a6a6"></div>
<div style="position:absolute;top:583.84px;line-height:14px;font-size:12px;white-space:pre;letter-spacing:0.045px;left:552.9px;">Attendance</div>
<svg style="position:absolute;left:804px;top:582px" width="16" height="16" viewBox="0 0 16 16"><circle cx="8" cy="8" r="8" fill="#dc262b"/><rect x="4" y="6.6" width="8" height="2.8" rx="0.6" fill="#fbeaea"/></svg>
<div style="position:absolute;left:239px;top:623px;width:601px;height:1px;background:#a6a6a6"></div>
<div style="position:absolute;left:289px;top:602px;width:1px;height:22px;background:#a6a6a6"></div>
<div style="position:absolute;top:605.84px;line-height:14px;font-size:12px;white-space:pre;left:-114.5px;width:400px;text-align:right;">5</div>
<div style="position:absolute;left:549px;top:602px;width:1px;height:22px;background:#a6a6a6"></div>
<div style="position:absolute;top:605.84px;line-height:14px;font-size:12px;white-space:pre;letter-spacing:-0.099px;left:292.9px;">Attendance Report</div>
<div style="position:absolute;left:779px;top:602px;width:1px;height:22px;background:#a6a6a6"></div>
<div style="position:absolute;top:605.84px;line-height:14px;font-size:12px;white-space:pre;letter-spacing:0.045px;left:552.9px;">Attendance</div>
<svg style="position:absolute;left:804px;top:604px" width="16" height="16" viewBox="0 0 16 16"><circle cx="8" cy="8" r="8" fill="#dc262b"/><rect x="4" y="6.6" width="8" height="2.8" rx="0.6" fill="#fbeaea"/></svg>
<div style="position:absolute;left:289px;top:624px;width:1px;height:2px;background:#a6a6a6"></div>
<div style="position:absolute;left:549px;top:624px;width:1px;height:2px;background:#a6a6a6"></div>
<div style="position:absolute;left:779px;top:624px;width:1px;height:2px;background:#a6a6a6"></div>
<div style="position:absolute;left:840px;top:484px;width:17px;height:142px;background:#f0f0f0"></div>
<div style="position:absolute;left:841px;top:501px;width:15px;height:91px;background:#cdcdcd"></div>
<svg style="position:absolute;left:842.5px;top:487px" width="12" height="12" viewBox="-6 -6 12 12"><path d="M-3.5,2 L0,-1.6 L3.5,2" stroke="#4f4f4f" stroke-width="2" fill="none"/></svg>
<svg style="position:absolute;left:842.5px;top:611.5px" width="12" height="12" viewBox="-6 -6 12 12"><path d="M-3.5,-2 L0,1.6 L3.5,-2" stroke="#4f4f4f" stroke-width="2" fill="none"/></svg>
<div style="position:absolute;left:239px;top:626px;width:601px;height:17px;background:#f0f0f0"></div>
<div style="position:absolute;left:256px;top:627px;width:561px;height:15px;background:#cdcdcd"></div>
<svg style="position:absolute;left:241px;top:628.5px" width="12" height="12" viewBox="-6 -6 12 12"><path d="M2,-3.5 L-1.6,0 L2,3.5" stroke="#4f4f4f" stroke-width="2" fill="none"/></svg>
<svg style="position:absolute;left:826px;top:628.5px" width="12" height="12" viewBox="-6 -6 12 12"><path d="M-2,-3.5 L1.6,0 L-2,3.5" stroke="#4f4f4f" stroke-width="2" fill="none"/></svg>
<div style="position:absolute;left:840px;top:626px;width:17px;height:17px;background:#f0f0f0"></div>
<div style="position:absolute;left:865px;top:246px;width:464px;height:397px;box-sizing:border-box;border:1px solid #dcdcdc"></div>
<div style="position:absolute;top:287.84px;line-height:14px;font-size:12px;white-space:pre;letter-spacing:0.6px;left:929.7px;">Module</div>
<div style="position:absolute;top:327.84px;line-height:14px;font-size:12px;white-space:pre;letter-spacing:-0.169px;left:893.2px;">Access Control</div>
<div style="position:absolute;left:1011px;top:283px;width:169px;height:23px;box-sizing:border-box;border:1px solid #adadad;background:#e1e1e1"></div>
<div style="position:absolute;top:287.84px;line-height:14px;font-size:12px;white-space:pre;letter-spacing:-0.099px;left:1014.8px;">Attendance Report</div>
<svg style="position:absolute;left:1165px;top:290px" width="12" height="10" viewBox="1165 290 12 10"><path d="M1167.3,293 L1171.4,297.2 L1175.5,293" stroke="#444" stroke-width="1" fill="none"/></svg>
<div style="position:absolute;left:1011px;top:318px;width:213px;height:40px;box-sizing:border-box;border:1px solid #dcdcdc;background:#fff"></div>
<svg style="position:absolute;left:1022px;top:332px" width="13" height="13" viewBox="0 0 13 13"><circle cx="6.5" cy="6.5" r="6" fill="#fff" stroke="#333"/><circle cx="6.5" cy="6.5" r="3.2" fill="#333"/></svg>
<div style="position:absolute;top:331.84px;line-height:14px;font-size:12px;white-space:pre;letter-spacing:-0.139px;left:1040.8px;">Read and Write</div>
<svg style="position:absolute;left:1131px;top:332px" width="13" height="13" viewBox="0 0 13 13"><circle cx="6.5" cy="6.5" r="6" fill="#fff" stroke="#333"/></svg>
<div style="position:absolute;top:331.84px;line-height:14px;font-size:12px;white-space:pre;letter-spacing:-0.25px;left:1149.9px;">Read Only</div>
<div style="position:absolute;left:1255px;top:443px;width:66px;height:29px;box-sizing:border-box;border:2px solid #0078d7;background:#e1e1e1"></div>
<svg style="position:absolute;left:1259.5px;top:446.8px" width="22" height="22" viewBox="0 0 22 22"><circle cx="11" cy="11" r="10.8" fill="#25c45e"/><path d="M4.9,11 H17.1 M11,4.9 V17.1" stroke="#f4fbf6" stroke-width="1.55"/></svg>
<div style="position:absolute;top:450.84px;line-height:14px;font-size:12px;white-space:pre;letter-spacing:-0.1px;left:1292.3px;">Add</div>
<div style="position:absolute;left:867px;top:476px;width:455px;height:161px;box-sizing:border-box;border:1px solid #000;background:#fff"></div>
<div style="position:absolute;left:870px;top:479px;width:434px;height:27px;background:#708090"></div>
<div style="position:absolute;left:869px;top:479px;width:1px;height:27px;background:#e9ecef"></div>
<div style="position:absolute;left:919px;top:480px;width:1px;height:25px;background:#fff"></div>
<div style="position:absolute;left:1119px;top:480px;width:1px;height:25px;background:#fff"></div>
<div style="position:absolute;left:1239px;top:480px;width:1px;height:25px;background:#fff"></div>
<div style="position:absolute;top:485.84px;line-height:14px;font-size:12px;white-space:pre;letter-spacing:-0.05px;left:878.7px;color:#fff">S.No.</div>
<div style="position:absolute;top:485.84px;line-height:14px;font-size:12px;white-space:pre;letter-spacing:0.534px;left:992.8px;color:#fff">Menu</div>
<div style="position:absolute;top:485.84px;line-height:14px;font-size:12px;white-space:pre;letter-spacing:-0.169px;left:1129.6px;color:#fff">Access Control</div>
<div style="position:absolute;top:485.84px;line-height:14px;font-size:12px;white-space:pre;letter-spacing:-0.04px;left:1248.5px;color:#fff">Remove</div>
<div style="position:absolute;left:870px;top:507px;width:434px;height:21px;background:#e1e1e1"></div>
<div style="position:absolute;left:868px;top:528px;width:436px;height:1px;background:#a6a6a6"></div>
<div style="position:absolute;left:918px;top:506px;width:1px;height:23px;background:#a6a6a6"></div>
<div style="position:absolute;top:510.84px;line-height:14px;font-size:12px;white-space:pre;left:514.5px;width:400px;text-align:right;">1</div>
<div style="position:absolute;left:1118px;top:506px;width:1px;height:23px;background:#a6a6a6"></div>
<div style="position:absolute;top:510.84px;line-height:14px;font-size:12px;white-space:pre;letter-spacing:-0.099px;left:921.9px;">Attendance Report</div>
<div style="position:absolute;left:1238px;top:506px;width:1px;height:23px;background:#a6a6a6"></div>
<div style="position:absolute;top:510.84px;line-height:14px;font-size:12px;white-space:pre;letter-spacing:-0.139px;left:1121.9px;">Read and Write</div>
<div style="position:absolute;left:1303px;top:506px;width:1px;height:23px;background:#a6a6a6"></div>
<svg style="position:absolute;left:1263px;top:509px" width="16" height="16" viewBox="0 0 16 16"><circle cx="8" cy="8" r="8" fill="#dc262b"/><rect x="4" y="6.6" width="8" height="2.8" rx="0.6" fill="#fbeaea"/></svg>
<div style="position:absolute;left:1164px;top:659px;width:78px;height:29px;box-sizing:border-box;border:1px solid #adadad;background:#e1e1e1"></div>
<svg style="position:absolute;left:1168px;top:664px" width="22" height="22" viewBox="0 0 22 22"><defs><linearGradient id="sv1" x1="0" y1="0" x2="1" y2="0"><stop offset="0" stop-color="#fff"/><stop offset="1" stop-color="#c9c9c9"/></linearGradient><linearGradient id="sv2" x1="0" y1="0" x2="0" y2="1"><stop offset="0" stop-color="#fafafa"/><stop offset="1" stop-color="#d6d6d6"/></linearGradient></defs><rect x="0.2" y="0" width="21.3" height="21" rx="0.8" fill="#2b4a50"/><rect x="6.1" y="0" width="11.2" height="5.6" fill="url(#sv1)"/><rect x="13.3" y="0.7" width="2.1" height="3.6" fill="#3a3a3a"/><rect x="2.5" y="8.8" width="16.8" height="10.4" fill="url(#sv2)"/><path d="M3.6,11 H18.2 M3.6,14.8 H18.2" stroke="#a9a9a9" stroke-width="0.7"/><rect x="2.5" y="19" width="16.8" height="1.6" fill="#e07820"/></svg>
<div style="position:absolute;top:666.84px;line-height:14px;font-size:12px;white-space:pre;left:1210.4px;;transform:scaleX(0.915);transform-origin:0 0;">Save</div>
<div style="position:absolute;left:1248px;top:659px;width:76px;height:29px;box-sizing:border-box;border:1px solid #adadad;background:#e1e1e1"></div>
<svg style="position:absolute;left:1253px;top:664px" width="20" height="20" viewBox="0 0 20 20"><defs><linearGradient id="cl1" x1="0" y1="0" x2="0" y2="1"><stop offset="0" stop-color="#c21515"/><stop offset="1" stop-color="#ea1f1f"/></linearGradient></defs><rect x="0" y="0" width="20" height="20" rx="0.8" fill="url(#cl1)"/><path d="M4.6,5 L15.4,15.4 M15.4,5 L4.6,15.4" stroke="#fff" stroke-width="3"/></svg>
<div style="position:absolute;top:666.84px;line-height:14px;font-size:12px;white-space:pre;letter-spacing:-0.35px;left:1288.2px;">Close</div>
</body></html>
